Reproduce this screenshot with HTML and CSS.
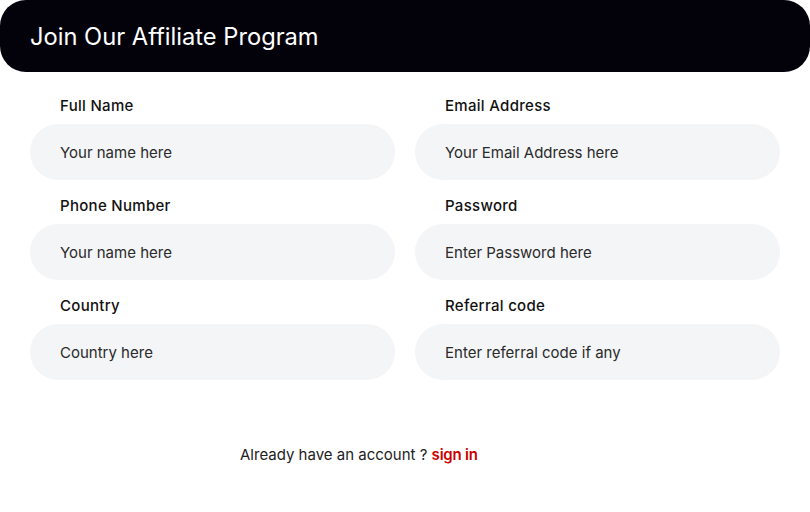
FILE: index.html
```html
<!DOCTYPE html>
<html>
<head>
<meta charset="utf-8">
<link rel="stylesheet" href="styles.css">
</head>
<body>
<header class="header">Join Our Affiliate Program</header>
<form class="form">
  <div class="field">
    <label class="label">Full Name</label>
    <div class="input">Your name here</div>
  </div>
  <div class="field">
    <label class="label">Email Address</label>
    <div class="input">Your Email Address here</div>
  </div>
  <div class="field">
    <label class="label">Phone Number</label>
    <div class="input">Your name here</div>
  </div>
  <div class="field">
    <label class="label">Password</label>
    <div class="input">Enter Password here</div>
  </div>
  <div class="field">
    <label class="label">Country</label>
    <div class="input">Country here</div>
  </div>
  <div class="field">
    <label class="label">Referral code</label>
    <div class="input">Enter referral code if any</div>
  </div>
</form>
<p class="footer">Already have an account ? <a class="signin">sign in</a></p>
</body>
</html>
```
FILE: styles.css
```css
* { box-sizing: border-box; }
body {
  margin: 0;
  background: #fff;
  font-family: Inter, "Noto Sans", sans-serif;
  color: #111;
  width: 810px;
}
.header {
  height: 72px;
  background: #03020a;
  color: #fff;
  border-radius: 26px;
  display: flex;
  align-items: center;
  padding-left: 30px;
  font-size: 23.7px;
  font-weight: 400;
}
.form {
  display: grid;
  grid-template-columns: 365px 365px;
  column-gap: 20px;
  row-gap: 16px;
  padding: 24px 30px 0;
}
.field {
  display: flex;
  flex-direction: column;
  gap: 8px;
}
.label {
  height: 20px;
  line-height: 20px;
  padding-left: 30px;
  font-size: 15px;
  font-weight: 500;
  letter-spacing: 0.3px;
  color: #111;
}
.input {
  height: 56px;
  border-radius: 28px;
  background: #f4f5f7;
  display: flex;
  align-items: center;
  padding-left: 30px;
  font-size: 15px;
  color: #2a2a2a;
}
.footer {
  margin: 65px 0 0 240px;
  line-height: 20px;
  font-size: 15px;
  color: #222;
}
.signin {
  color: #cc0000;
  font-weight: 600;
  letter-spacing: -0.2px;
}
```
